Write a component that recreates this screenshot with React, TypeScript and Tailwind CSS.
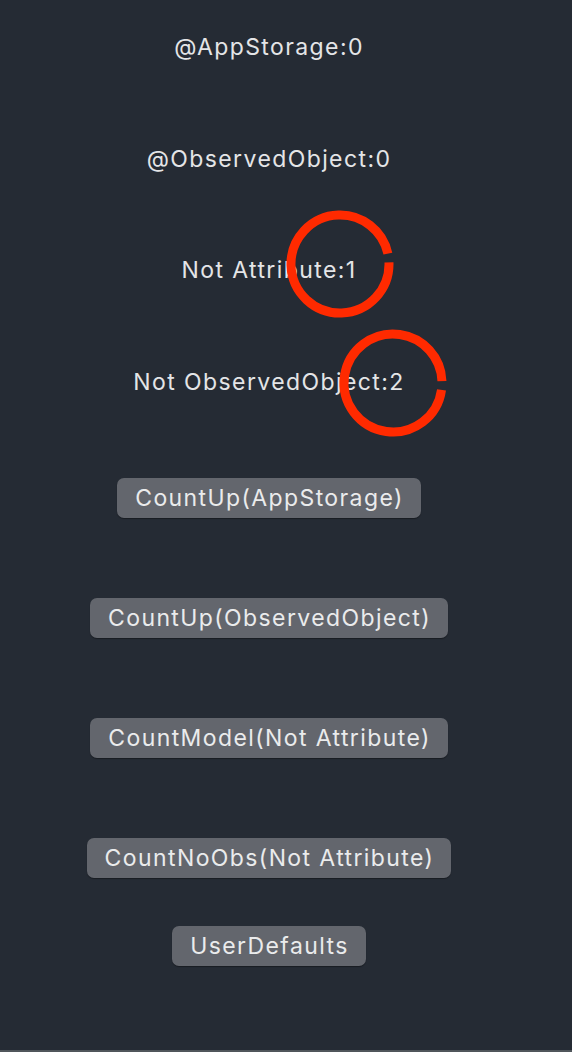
import React from "react";

const font = { fontFamily: "Inter, 'Noto Sans', sans-serif" };

function Label({ children, mt }: { children: React.ReactNode; mt: string }) {
  return (
    <div className={`${mt} h-[28px] leading-[28px] text-[23px] tracking-[1.4px] text-[#e4e5e7] whitespace-nowrap`}>
      {children}
    </div>
  );
}

function Btn({ children, mt }: { children: React.ReactNode; mt: string }) {
  return (
    <div
      className={`${mt} h-[40px] pl-[18px] pr-[17px] flex items-center rounded-[7px] bg-[#63666d] text-[23px] tracking-[1.4px] text-[#eaebec] whitespace-nowrap shadow-[0_1px_1px_rgba(0,0,0,0.35)]`}
    >
      {children}
    </div>
  );
}

function Scribble({ cx, cy, rot }: { cx: number; cy: number; rot: number }) {
  const r = 49;
  const c = 2 * Math.PI * r;
  return (
    <circle
      cx={cx}
      cy={cy}
      r={r}
      fill="none"
      stroke="#ff2a00"
      strokeWidth={9}
      strokeDasharray={`${c * 0.97} ${c * 0.03}`}
      transform={`rotate(${rot} ${cx} ${cy})`}
    />
  );
}

export default function App() {
  return (
    <div className="relative w-[572px] h-[1052px] bg-[#252b34] overflow-hidden" style={font}>
      <div className="flex flex-col items-center pt-[33px] pr-[34px]">
        <Label mt="mt-0">@AppStorage:0</Label>
        <Label mt="mt-[84px]">@ObservedObject:0</Label>
        <Label mt="mt-[83px]">Not Attribute:1</Label>
        <Label mt="mt-[84px]">Not ObservedObject:2</Label>
        <Btn mt="mt-[82px]">CountUp(AppStorage)</Btn>
        <Btn mt="mt-[80px]">CountUp(ObservedObject)</Btn>
        <Btn mt="mt-[80px]">CountModel(Not Attribute)</Btn>
        <Btn mt="mt-[80px]">CountNoObs(Not Attribute)</Btn>
        <Btn mt="mt-[48px]">UserDefaults</Btn>
      </div>
      <svg className="absolute left-0 top-0 pointer-events-none" width={572} height={1052}>
        <Scribble cx={340} cy={264} rot={-2} />
        <Scribble cx={393} cy={383} rot={8} />
      </svg>
      <div className="absolute left-0 bottom-0 w-full h-[2px] bg-[#50565b]" />
    </div>
  );
}
